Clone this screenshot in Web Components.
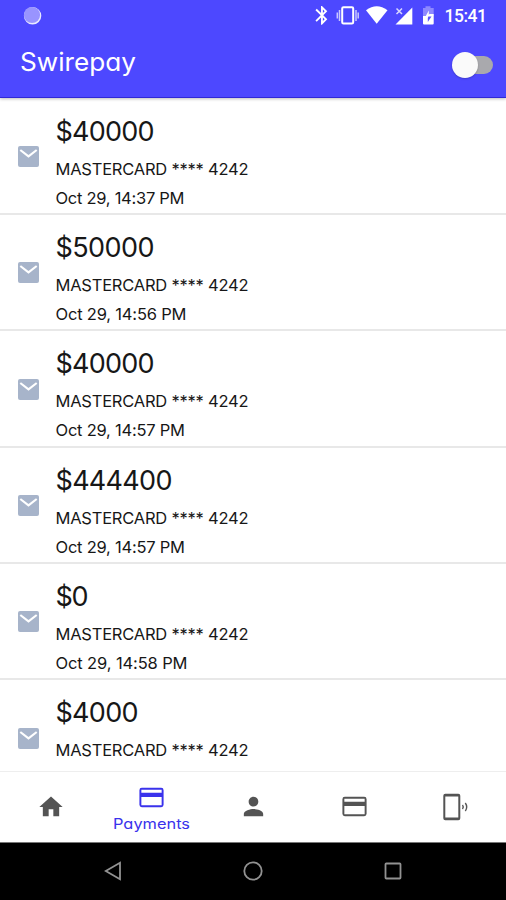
<!DOCTYPE html>
<html lang="en">
<head>
<meta charset="utf-8">
<title>Swirepay</title>
<style>
html,body{margin:0;height:100%;background:#fff;overflow:hidden}
body{font-family:Inter,"Open Sans","Liberation Sans",sans-serif;color:#171717}
</style>
</head>
<body>
<swire-app></swire-app>
<script>
const define=(name,html,setup)=>{
  const t=document.createElement('template');
  t.innerHTML=html;
  customElements.define(name,class extends HTMLElement{
    connectedCallback(){
      if(this.shadowRoot)return;
      this.attachShadow({mode:'open'}).append(t.content.cloneNode(true));
      if(setup)setup(this,this.shadowRoot);
    }
  });
};

/* One line of text fitted to a given width, by tracking or by a horizontal stretch. */
define('fit-text',`<style>
:host{display:block;white-space:pre;font-feature-settings:"cv11";line-height:1}
span{display:inline-block;transform-origin:0 50%}
</style><span></span>`,(el,root)=>{
  const s=root.querySelector('span'),text=el.getAttribute('text');
  s.textContent=text;
  const w=parseFloat(el.getAttribute('width')),natural=s.getBoundingClientRect().width;
  if(el.hasAttribute('stretch')){
    el.style.width=w+'px';
    s.style.transform='scaleX('+w/natural+')';
  }else s.style.letterSpacing=((w-natural)/(text.length-1))+'px';
});

define('status-bar',`<style>
:host{display:flex;align-items:center;height:32px;padding:0 19.500px 0 23px;box-sizing:border-box;color:#fff;font:500 17.500px/32px Roboto,"Liberation Sans",sans-serif}
.icons{margin-left:auto;margin-right:8px}
svg{display:block}
fit-text{padding-top:1px}
</style>
<svg width="19" height="30" viewBox="0 0 19 30"><circle cx="9.600" cy="14.800" r="8.700" fill="#e9e9ff"/><circle cx="9" cy="14" r="8.100" fill="#9994ff"/></svg>
<svg class="icons" width="124" height="32" viewBox="312 0 124 32" fill="#fff">
<path transform="translate(310.800 4.200) scale(.93)" d="M17.710 7.710L12 2h-1v7.590L6.410 5 5 6.410 10.590 12 5 17.590 6.410 19 11 14.410V22h1l5.710-5.710-4.300-4.290 4.300-4.290zM13 5.830l1.880 1.880L13 9.590V5.830zm1.880 10.460L13 18.170v-3.760l1.880 1.880z"/>
<rect x="342.200" y="7.200" width="11" height="16.400" rx="1.300" fill="none" stroke="#fff" stroke-width="2"/>
<path d="M339.500 10v11M356 10v11M337.300 12.500v6M358.200 12.500v6" stroke="#c9c7ff" stroke-width="1.500"/>
<path d="M366 10.200Q376.700 2.500 387.500 10.200L376.700 23.800Z"/>
<path d="M412.300 7.500V24.500H395.500Z"/>
<path d="M396.500 8.500l5.500 5.500M402 8.500l-5.500 5.500" stroke="#d9d8ff" stroke-width="1.500"/>
<path d="M423 8h2.500V6.300h5V8h3.200v8h-10.700z" fill="#8d88ff"/>
<path d="M423 16h4l2.500-2h4.200v9.500q0 1-1 1h-8.700q-1 0-1-1z"/>
<path d="M428.800 10.500v5.500h2.700l-4 6v-4.500h-2.500z" fill="#fff"/>
<path d="M428.300 16.500h3.200l-3.700 5.500v-4z" fill="#5b54ff"/>
</svg><fit-text text="15:41" width="42.500"></fit-text>`);

define('toggle-switch',`<style>
:host{display:flex;align-items:center;width:38px;height:18px;border-radius:9px;background:#a9a9ad}
i{width:26px;height:26px;flex:none;border-radius:50%;background:#fafafa;margin-left:-3px;box-shadow:0 1px 2px #0003}
</style><i></i>`);

define('app-header',`<style>
:host{display:block;height:98.400px;box-sizing:border-box;background:#4d48ff;border-bottom:1.500px solid #3029d6;box-shadow:0 1px 3px #0004;position:relative;z-index:1}
.bar{display:flex;align-items:center;justify-content:space-between;padding:0 13px 0 20px;height:65px;color:#fff;font-size:25.500px}
fit-text{margin-top:-5px}
</style><status-bar></status-bar><div class="bar"><fit-text stretch text="Swirepay" width="116"></fit-text><toggle-switch></toggle-switch></div>`);

define('payment-row',`<style>
:host{display:flex;align-items:center;gap:16.500px;height:116.400px;box-sizing:border-box;border-bottom:2px solid #e8e8e8;padding-left:18px}
svg{flex:none;margin-top:1.500px}
.text{display:grid;grid-template-rows:31px 17px 17px;row-gap:12px;padding-top:13px}
.amount{font-size:27px;font-weight:370;line-height:27px}
.line{font-size:16.500px;line-height:17px;font-weight:370}
:host([last]) .text{align-self:start;padding-top:19px}
</style>
<svg width="21" height="21" viewBox="0 0 21 21"><rect width="21" height="21" rx="2" fill="#a7b4ca"/><path d="M2.300 4l8.200 6.300L18.700 4" fill="none" stroke="#fff" stroke-width="2.200"/></svg>
<div class="text"></div>`,(el,root)=>{
  const add=(cls,text,width)=>{
    const f=document.createElement('fit-text');
    f.className=cls;f.setAttribute('text',text);f.setAttribute('width',width);
    root.querySelector('.text').append(f);
  };
  add('amount',el.getAttribute('amount'),el.getAttribute('amount-width'));
  add('line','MASTERCARD **** 4242',193);
  if(el.hasAttribute('date'))add('line',el.getAttribute('date'),el.getAttribute('date-width'));
});

define('nav-tab',`<style>
:host{display:flex;flex:1 1 0;flex-direction:column;align-items:center;justify-content:center;color:#545454;font-size:14.500px}
:host([active]){color:#3a32ec;padding-top:2px}
::slotted(svg){display:block;fill:currentColor}
</style><slot></slot>`);

const card='<svg width="29" height="29" viewBox="0 0 24 24"><path fill-rule="evenodd" d="M4 4h16q2 0 2 2v12q0 2-2 2H4q-2 0-2-2V6q0-2 2-2zM3.600 5.600v2.500h16.800V5.600zM3.600 11.500v6.900h16.800v-6.900z"/></svg>';
define('bottom-nav',`<style>
:host{display:flex;height:71px;box-sizing:border-box;border-top:1px solid #eee;background:#fff}
svg{display:block}
fit-text{margin-top:5px}
</style>
<nav-tab><svg width="28" height="28" viewBox="0 0 24 24"><path d="M10 20v-6h4v6h5v-8h3L12 3 2 12h3v8z"/></svg></nav-tab>
<nav-tab active>${card}<fit-text stretch text="Payments" width="77"></fit-text></nav-tab>
<nav-tab><svg width="29" height="29" viewBox="0 0 24 24"><path d="M12 12c2.210 0 4-1.790 4-4s-1.790-4-4-4-4 1.790-4 4 1.790 4 4 4zm0 2c-2.670 0-8 1.340-8 4v2h16v-2c0-2.660-5.330-4-8-4z"/></svg></nav-tab>
<nav-tab>${card}</nav-tab>
<nav-tab><svg width="28" height="28" viewBox="0 0 28 28"><path fill-rule="evenodd" d="M4.300 .8h13q2 0 2 2v22.400q0 2-2 2h-13q-2 0-2-2V2.800q0-2 2-2zM4.300 3.500v21h13v-21z"/><path d="M21.500 12q1.500 2 0 4M24.300 10q2.800 4 0 8" fill="none" stroke="currentColor" stroke-width="1.400"/></svg></nav-tab>`);

define('system-nav',`<style>
:host{display:flex;justify-content:center;gap:116px;align-items:center;height:58.500px;background:#000;border-top:1px solid #777;box-sizing:border-box}
svg{display:block;fill:none;stroke:#929292;stroke-width:1.800;margin-top:-1px}
</style>
<svg width="24" height="24" viewBox="0 0 24 24"><path d="M19 3.700v16.600L4.800 12z"/></svg>
<svg width="24" height="24" viewBox="0 0 24 24"><circle cx="12" cy="12" r="8.700"/></svg>
<svg width="24" height="24" viewBox="0 0 24 24"><rect x="4.500" y="4.500" width="15" height="15" rx=".8"/></svg>`);

define('swire-app',`<style>
:host{display:flex;flex-direction:column;width:506px;height:900px;overflow:hidden;background:#fff}
app-header,bottom-nav,system-nav{flex:none}
main{flex:1 1 0;min-height:0;overflow:hidden}
</style>
<app-header></app-header>
<main>
<payment-row amount="$40000" amount-width="99" date="Oct 29, 14:37 PM" date-width="129"></payment-row>
<payment-row amount="$50000" amount-width="99" date="Oct 29, 14:56 PM" date-width="131"></payment-row>
<payment-row amount="$40000" amount-width="99" date="Oct 29, 14:57 PM" date-width="129.500"></payment-row>
<payment-row amount="$444400" amount-width="117" date="Oct 29, 14:57 PM" date-width="129.500"></payment-row>
<payment-row amount="$0" amount-width="33" date="Oct 29, 14:58 PM" date-width="132"></payment-row>
<payment-row last amount="$4000" amount-width="83"></payment-row>
</main>
<bottom-nav></bottom-nav>
<system-nav></system-nav>`);
</script>
</body>
</html>
